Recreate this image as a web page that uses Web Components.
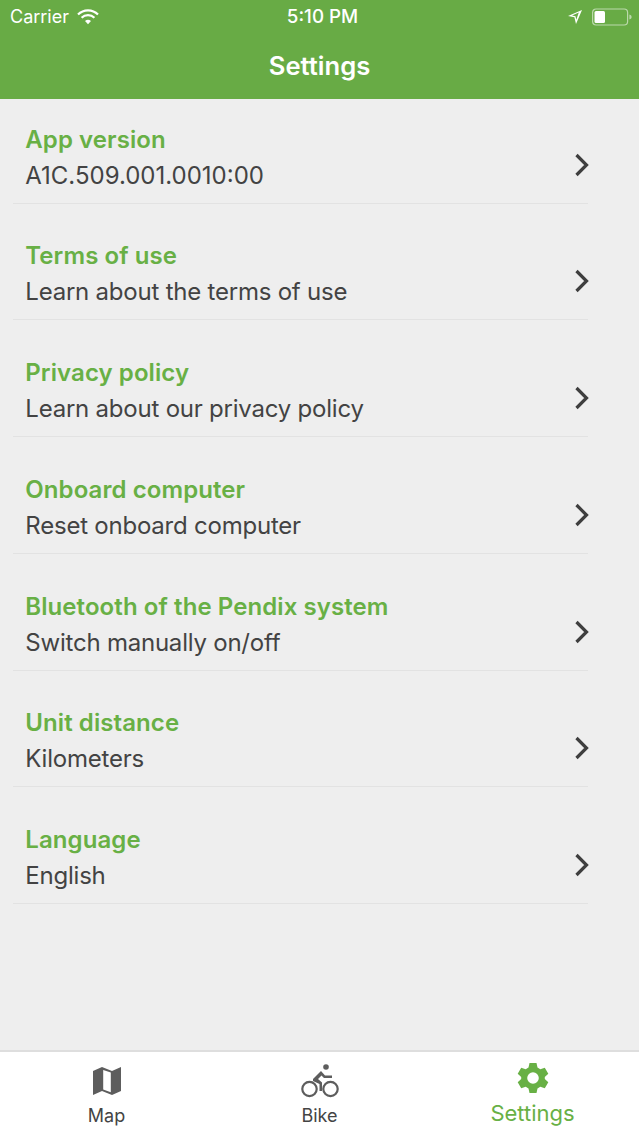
<!DOCTYPE html>
<html>
<head>
<meta charset="utf-8">
<title>Settings</title>
<style>
  html, body { margin: 0; height: 100%; }
  body { font-family: Inter, "Liberation Sans", sans-serif; background: #eeeeee; }
  app-shell { height: 1136px; }
</style>
</head>
<body>
<app-shell>
  <status-bar slot="header"></status-bar>
  <nav-title slot="header">Settings</nav-title>
  <setting-row title-text="App version" style="--sub-track: 0px">A1C.509.001.0010:00</setting-row>
  <setting-row title-text="Terms of use">Learn about the terms of use</setting-row>
  <setting-row title-text="Privacy policy">Learn about our privacy policy</setting-row>
  <setting-row title-text="Onboard computer">Reset onboard computer</setting-row>
  <setting-row title-text="Bluetooth of the Pendix system">Switch manually on/off</setting-row>
  <setting-row title-text="Unit distance">Kilometers</setting-row>
  <setting-row title-text="Language">English</setting-row>
  <tab-bar slot="footer"></tab-bar>
</app-shell>
<script>
class AppShell extends HTMLElement {
  constructor() {
    super();
    this.attachShadow({ mode: "open" }).innerHTML = `
      <style>
        :host { display: flex; flex-direction: column; }
        header { background: #68ab45; height: 99px; flex: none; }
        main { flex: 1; padding-top: 23.5px; }
      </style>
      <header><slot name="header"></slot></header>
      <main><slot></slot></main>
      <slot name="footer"></slot>`;
  }
}

class StatusBar extends HTMLElement {
  constructor() {
    super();
    this.attachShadow({ mode: "open" }).innerHTML = `
      <style>
        :host { display: grid; grid-template-columns: 1fr auto 1fr; align-items: center; height: 33px; padding: 0 7px 0 10px; color: #fff; }
        .left { display: flex; align-items: center; gap: 8px; font-size: 18px; }
        .time { font-weight: 500; font-size: 18.8px; margin-left: 3px; }
        .right { display: flex; justify-content: flex-end; align-items: center; gap: 10px; }
        svg { display: block; }
      </style>
      <div class="left">
        <span>Carrier</span>
        <svg width="22" height="16" viewBox="0 0 22 16">
          <path d="M1 5.5 A14 14 0 0 1 21 5.5" fill="none" stroke="#fff" stroke-width="2.2"/>
          <path d="M4.6 8.8 A9 9 0 0 1 17.4 8.8" fill="none" stroke="#fff" stroke-width="2.2"/>
          <path d="M8 12 L11 15.2 L14 12 A4.5 4.5 0 0 0 8 12 Z" fill="#fff"/>
        </svg>
      </div>
      <div class="time">5:10 PM</div>
      <div class="right">
        <svg width="14" height="15" viewBox="0 0 14 15"><path d="M14 1 L0 7 L6.4 8.3 L8 15 Z M10.8 3.6 L4 6.6 L7.5 7.3 L8.3 10.8 Z" fill="#fff" fill-rule="evenodd"/></svg>
        <svg width="40" height="18" viewBox="0 0 40 18">
          <rect x=".6" y="1" width="35" height="16" rx="3.5" fill="none" stroke="#fff" stroke-opacity=".55" stroke-width="1.2"/>
          <rect x="2.5" y="3" width="10.5" height="12" rx="1.5" fill="#fff"/>
          <path d="M37.4 6.5 C39 7 39.6 8 39.6 9 C39.6 10 39 11 37.4 11.5 Z" fill="#fff" fill-opacity=".55"/>
        </svg>
      </div>`;
  }
}

class NavTitle extends HTMLElement {
  constructor() {
    super();
    this.attachShadow({ mode: "open" }).innerHTML = `
      <style>
        :host { display: flex; justify-content: center; align-items: center; height: 64px; color: #fff; font-size: 25.6px; font-weight: 600; }
      </style>
      <slot></slot>`;
  }
}

class SettingRow extends HTMLElement {
  constructor() {
    super();
    this.attachShadow({ mode: "open" }).innerHTML = `
      <style>
        :host { display: flex; justify-content: space-between; align-items: flex-start; margin: 0 51px 35.8px 13px; padding: 0 0 8px 12.3px; border-bottom: 1px solid #e2e2e2; }
        .title { color: #68b045; font-size: 24px; font-weight: 600; line-height: 34px; letter-spacing: 0.08px; }
        .sub { color: #434343; font-size: 24px; line-height: 38px; letter-spacing: var(--sub-track, -0.22px); }
        svg { display: block; margin: 28px -3px 0 0; }
      </style>
      <div>
        <div class="title"></div>
        <div class="sub"><slot></slot></div>
      </div>
      <svg width="18" height="28" viewBox="0 0 18 28"><path d="M3.5 4 L13.5 14 L3.5 24" fill="none" stroke="#3e3e3e" stroke-width="3.2"/></svg>`;
    this.shadowRoot.querySelector(".title").textContent = this.getAttribute("title-text");
  }
}

class TabBar extends HTMLElement {
  constructor() {
    super();
    this.attachShadow({ mode: "open" }).innerHTML = `
      <style>
        :host { display: grid; grid-template-columns: repeat(3, 1fr); height: 84px; flex: none; background: #fff; border-top: 2px solid #dedede; }
        div { display: flex; flex-direction: column; align-items: center; color: #444; font-size: 18px; }
        svg { display: block; }
        span { line-height: 22px; }
        .map { margin-top: 15px; }
        .map + span { margin-top: 10px; }
        .bike { margin-top: 12px; }
        .bike + span { margin-top: 7px; }
        .on { color: #68b045; font-size: 22px; }
        .on svg { margin-top: 10px; }
        .on span { margin-top: 2px; line-height: 34px; }
      </style>
      <div>
        <svg class="map" width="28" height="28" viewBox="0 0 28 28"><path fill-rule="evenodd" fill="#5d5d5d" d="M0 4 L9 0 L19 4 L28 0 V24 L19 28 L9 24 L0 28 Z M10.2 3 V22.6 L17.8 25.2 V5.6 Z"/></svg>
        <span>Map</span>
      </div>
      <div>
        <svg class="bike" width="38" height="34" viewBox="0 0 38 34">
          <circle cx="8.5" cy="25" r="7.2" fill="none" stroke="#5d5d5d" stroke-width="2.2"/>
          <circle cx="29.5" cy="25" r="7.2" fill="none" stroke="#5d5d5d" stroke-width="2.2"/>
          <circle cx="25" cy="3" r="2.8" fill="#5d5d5d"/>
          <path d="M12 15 L20 7 L24 11.5 L31 11.5 V14 L23 14 L20.5 11.5 L17 15 L21 18.5 V27 H18.5 V20 L12 17 Z" fill="#5d5d5d"/>
        </svg>
        <span>Bike</span>
      </div>
      <div class="on">
        <svg width="32" height="32" viewBox="0 0 32 32"><path fill-rule="evenodd" fill="#68b045" d="M12.5 1 H19.5 L20.5 5.6 L23.3 7.2 L27.8 5.8 L31.3 11.8 L27.8 15 V17 L31.3 20.2 L27.8 26.2 L23.3 24.8 L20.5 26.4 L19.5 31 H12.5 L11.5 26.4 L8.7 24.8 L4.2 26.2 L0.7 20.2 L4.2 17 V15 L0.7 11.8 L4.2 5.8 L8.7 7.2 L11.5 5.6 Z M16 10.2 A5.8 5.8 0 1 0 16 21.8 A5.8 5.8 0 1 0 16 10.2 Z"/></svg>
        <span>Settings</span>
      </div>`;
  }
}

customElements.define("app-shell", AppShell);
customElements.define("status-bar", StatusBar);
customElements.define("nav-title", NavTitle);
customElements.define("setting-row", SettingRow);
customElements.define("tab-bar", TabBar);
</script>
</body>
</html>
